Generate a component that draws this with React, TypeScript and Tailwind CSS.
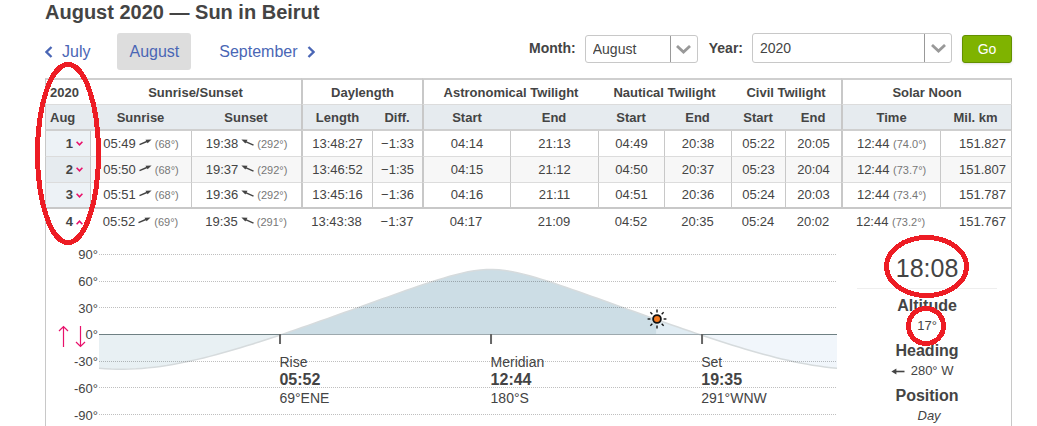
import { useState } from 'react';
import clsx from 'clsx';

interface SunDay {
  day: number;
  trend: 'down' | 'up';
  rise: string;
  riseAngle: string;
  set: string;
  setAngle: string;
  length: string;
  diff: string;
  twilight: string[];
  noon: string;
  noonAngle: string;
  distance: string;
}

const days: SunDay[] = [
  {
    day: 1, trend: 'down', rise: '05:49', riseAngle: '(68°)', set: '19:38', setAngle: '(292°)',
    length: '13:48:27', diff: '−1:33', twilight: ['04:14', '21:13', '04:49', '20:38', '05:22', '20:05'],
    noon: '12:44', noonAngle: '(74.0°)', distance: '151.827',
  },
  {
    day: 2, trend: 'down', rise: '05:50', riseAngle: '(68°)', set: '19:37', setAngle: '(292°)',
    length: '13:46:52', diff: '−1:35', twilight: ['04:15', '21:12', '04:50', '20:37', '05:23', '20:04'],
    noon: '12:44', noonAngle: '(73.7°)', distance: '151.807',
  },
  {
    day: 3, trend: 'down', rise: '05:51', riseAngle: '(68°)', set: '19:36', setAngle: '(292°)',
    length: '13:45:16', diff: '−1:36', twilight: ['04:16', '21:11', '04:51', '20:36', '05:24', '20:03'],
    noon: '12:44', noonAngle: '(73.4°)', distance: '151.787',
  },
  {
    day: 4, trend: 'up', rise: '05:52', riseAngle: '(69°)', set: '19:35', setAngle: '(291°)',
    length: '13:43:38', diff: '−1:37', twilight: ['04:17', '21:09', '04:52', '20:35', '05:24', '20:02'],
    noon: '12:44', noonAngle: '(73.2°)', distance: '151.767',
  },
];

const months = ['July', 'August', 'September'];
const years = ['2019', '2020', '2021'];

// Chart geometry
const CHART_W = 738;
const CHART_H = 181;
const HORIZON = 89.5;
const PX_PER_DEG = 160 / 180;
const gridLines = [9.5, 36.5, 62.5, 89.5, 116.5, 142.5, 169.5];
const axisLabels = ['90°', '60°', '30°', '0°', '-30°', '-60°', '-90°'];

const RISE = 5 + 52 / 60;
const NOON = 12 + 44 / 60;
const SET = 19 + 35 / 60;
const NOW = 18 + 8 / 60;

const rad = (deg: number) => (deg * Math.PI) / 180;
const hourToX = (hour: number) => (hour / 24) * CHART_W;

// Solar altitude for Beirut (33.9°N) in early August
const altitudeY = (hour: number) => {
  const lat = rad(33.9);
  const dec = rad(17.1);
  const angle = rad((hour - NOON) * 15);
  const alt = Math.asin(Math.sin(lat) * Math.sin(dec) + Math.cos(lat) * Math.cos(dec) * Math.cos(angle));
  return HORIZON - ((alt * 180) / Math.PI) * PX_PER_DEG;
};

const curve = (from: number, to: number) => {
  const steps = 60;
  return Array.from({ length: steps + 1 }, (_, i) => {
    const hour = from + ((to - from) * i) / steps;
    return `${hourToX(hour).toFixed(1)},${altitudeY(hour).toFixed(2)}`;
  }).join(' L');
};

const area = (from: number, to: number) =>
  `M${hourToX(from).toFixed(1)},${HORIZON} L${curve(from, to)} L${hourToX(to).toFixed(1)},${HORIZON} Z`;

const events = [
  { name: 'Rise', time: '05:52', heading: '69°ENE', hour: RISE },
  { name: 'Meridian', time: '12:44', heading: '180°S', hour: NOON },
  { name: 'Set', time: '19:35', heading: '291°WNW', hour: SET },
];

function Chevron({ d }: { d: string }) {
  return (
    <svg className="h-3 w-2" viewBox="0 0 8 12" fill="none" stroke="currentColor" strokeWidth="2.3" aria-hidden="true">
      <path d={d} />
    </svg>
  );
}

function RiseArrow() {
  return (
    <svg className="mx-[3px] mb-1 inline-block h-[7px] w-[13px]" viewBox="0 0 13 7" aria-hidden="true">
      <path d="M0.5 5.6 L9 2" stroke="#444" strokeWidth="1.4" />
      <path d="M12.6 0.6 L6.5 0.8 L8.6 4.2 Z" fill="#444" />
    </svg>
  );
}

function SetArrow() {
  return (
    <svg className="mx-[3px] mb-1 inline-block h-[7px] w-[13px]" viewBox="0 0 13 7" aria-hidden="true">
      <path d="M12.5 6.2 L4 2.4" stroke="#444" strokeWidth="1.4" />
      <path d="M0.4 0.6 L6.5 0.8 L4.4 4.4 Z" fill="#444" />
    </svg>
  );
}

function Ring({ className, width, height }: { className: string; width: number; height: number }) {
  return (
    <svg
      className={clsx('pointer-events-none absolute', className)}
      width={width}
      height={height}
      viewBox={`0 0 ${width} ${height}`}
      aria-hidden="true"
    >
      <ellipse
        cx={width / 2}
        cy={height / 2}
        rx={width / 2 - 2.5}
        ry={height / 2 - 2.5}
        fill="none"
        stroke="#ed1c24"
        strokeWidth="5"
        shapeRendering="crispEdges"
      />
    </svg>
  );
}

interface PickerProps {
  id: string;
  value: string;
  options: string[];
  onChange: (value: string) => void;
  className: string;
}

function Picker({ id, value, options, onChange, className }: PickerProps) {
  return (
    <div className={clsx('relative', className)}>
      <select
        id={id}
        value={value}
        onChange={(e) => onChange(e.target.value)}
        className="block h-full w-full appearance-none rounded-[3px] border border-[#c8c8c8] bg-white pr-7 pl-[7px] text-sm"
      >
        {options.map((option) => (
          <option key={option}>{option}</option>
        ))}
      </select>
      <span className="pointer-events-none absolute inset-y-px right-px flex w-[27px] items-center justify-center border-l border-[#999]">
        <svg className="h-[9px] w-[15px]" viewBox="0 0 15 9" fill="none" stroke="#999" strokeWidth="2.8" aria-hidden="true">
          <path d="M1 1 L7.5 7 L14 1" />
        </svg>
      </span>
    </div>
  );
}

function MonthNav() {
  return (
    <nav className="flex items-center text-base text-[#4a66b5]">
      <a href="#july" className="flex items-center gap-[9px]">
        <Chevron d="M6.5 1 L1.5 6 L6.5 11" />
        July
      </a>
      <a href="#august" className="mr-7 ml-[27px] flex h-[37px] items-center rounded-[3px] bg-[#ddd] px-3">
        August
      </a>
      <a href="#september" className="flex items-center gap-[9px]">
        September
        <Chevron d="M1.5 1 L6.5 6 L1.5 11" />
      </a>
    </nav>
  );
}

function DayRow({ data, last, striped }: { data: SunDay; last: boolean; striped: boolean }) {
  const open = data.trend === 'up';
  const line = open ? '' : last ? 'border-b-2 border-b-[#c8c8c8]' : 'border-b border-b-[#dcdcdc]';
  const cell = clsx('p-0', line, !open && 'border-l border-l-[#c8c8c8]');
  const group = clsx('p-0', line, !open && 'border-l-2 border-l-[#c8c8c8]');

  return (
    <tr className={clsx('h-[26px]', striped && 'bg-[#f7f7f7]')}>
      <th
        scope="row"
        className={clsx(
          'border-l border-l-[#c8c8c8] p-0 pr-[7px] text-right font-bold',
          line,
          !open && (striped ? 'bg-[#e6ebef]' : 'bg-[#edf2f6]'),
        )}
      >
        <button type="button" aria-label={`Day ${data.day}`} className="inline-flex items-center gap-[3px]">
          {data.day}
          <svg className="h-[5px] w-[7px]" viewBox="0 0 7 5" fill="none" stroke="#e8116b" strokeWidth="1.6" aria-hidden="true">
            <path d={open ? 'M0.6 4.2 L3.5 1.2 L6.4 4.2' : 'M0.6 0.8 L3.5 3.8 L6.4 0.8'} />
          </svg>
        </button>
      </th>
      <td className={cell}>
        {data.rise}
        <RiseArrow />
        <span className="text-[11px] text-[#777]">{data.riseAngle}</span>
      </td>
      <td className={cell}>
        {data.set}
        <SetArrow />
        <span className="text-[11px] text-[#777]">{data.setAngle}</span>
      </td>
      <td className={group}>{data.length}</td>
      <td className={cell}>{data.diff}</td>
      {data.twilight.map((time, i) => (
        <td key={i} className={i === 0 ? group : cell}>
          {time}
        </td>
      ))}
      <td className={group}>
        {data.noon} <span className="text-[11px] text-[#777]">{data.noonAngle}</span>
      </td>
      <td className={clsx(cell, 'border-r border-r-[#c8c8c8] pr-[5px] text-right')}>{data.distance}</td>
    </tr>
  );
}

function AltitudeChart() {
  return (
    <div className="relative flex flex-1">
      <div className="flex w-[53px] flex-col justify-between pr-px text-right text-[13px] leading-5">
        {axisLabels.map((label) => (
          <span key={label}>{label}</span>
        ))}
      </div>
      <svg
        className="absolute top-[80px] left-3 h-[23px] w-7"
        viewBox="0 0 28 23"
        fill="none"
        stroke="#e8116b"
        strokeWidth="1.2"
        aria-hidden="true"
      >
        <path d="M5.5 22 V1.5 M1 6 L5.5 1.5 L10 6" />
        <path d="M22.5 1 V21.5 M18 17 L22.5 21.5 L27 17" />
      </svg>
      <div className="relative flex-1">
        <svg
          className="block h-[181px] w-full"
          viewBox={`0 0 ${CHART_W} ${CHART_H}`}
          preserveAspectRatio="none"
          role="img"
          aria-label="Sun altitude"
        >
          <path d={area(0, RISE)} fill="#e8f0f3" />
          <path d={area(RISE, NOW)} fill="#ccdde5" />
          <path d={area(NOW, SET)} fill="#e0ecf3" />
          <path d={area(SET, 24)} fill="#f1f6fb" />
          <path d={`M${curve(0, 12)} L${curve(12, 24)}`} fill="none" stroke="#d6dbdd" strokeWidth="1.5" />
          {gridLines.map((y) => (
            <line
              key={y}
              x1="0"
              x2={CHART_W}
              y1={y}
              y2={y}
              stroke="#000"
              strokeOpacity="0.25"
              strokeDasharray="1 1"
              shapeRendering="crispEdges"
            />
          ))}
          <path
            d={`M0 ${HORIZON} H${hourToX(RISE)} M${hourToX(SET)} ${HORIZON} H${CHART_W}`}
            stroke="#6f8083"
            shapeRendering="crispEdges"
          />
          <path d={`M${hourToX(RISE)} ${HORIZON} H${hourToX(SET)}`} stroke="#9da9ae" shapeRendering="crispEdges" />
          {events.map((event) => (
            <rect key={event.name} x={Math.floor(hourToX(event.hour))} y="89" width="2" height="10" fill="#666" />
          ))}
        </svg>
        {events.map((event) => (
          <div
            key={event.name}
            className="absolute top-[108px] text-sm leading-[18px]"
            style={{ left: `${(event.hour / 24) * 100}%` }}
          >
            <div>{event.name}</div>
            <div className="text-base leading-[18px] font-bold">{event.time}</div>
            <div>{event.heading}</div>
          </div>
        ))}
        <svg
          className="absolute top-16 h-5 w-5 -translate-x-1/2"
          style={{ left: `${(NOW / 24) * 100}%` }}
          viewBox="-10 -10 20 20"
          aria-hidden="true"
        >
          <circle r="3.9" fill="#f47a20" stroke="#111" strokeWidth="1.8" />
          {[0, 45, 90, 135, 180, 225, 270, 315].map((deg) => (
            <path key={deg} d="M0 -6.6 V-9.4" stroke="#111" strokeWidth="1.4" transform={`rotate(${deg})`} />
          ))}
        </svg>
      </div>
    </div>
  );
}

function PositionPanel() {
  return (
    <div className="relative mr-[14px] ml-5 w-[140px] text-center text-[13px] leading-5">
      <div className="border-b border-[#eee] pt-[3px] text-[25px] leading-10">18:08</div>
      <dl className="flex flex-col gap-1 pt-[6px]">
        <div>
          <dt className="text-base leading-[21px] font-bold">Altitude</dt>
          <dd>17°</dd>
        </div>
        <div>
          <dt className="text-base leading-[21px] font-bold">Heading</dt>
          <dd className="flex items-center justify-center gap-[6px] pr-[10px]">
            <svg className="h-[7px] w-[14px]" viewBox="0 0 14 7" aria-hidden="true">
              <path d="M3 3.5 H13.5" stroke="#444" strokeWidth="1.6" />
              <path d="M0.4 3.5 L5.4 0.6 V6.4 Z" fill="#444" />
            </svg>
            280° W
          </dd>
        </div>
        <div>
          <dt className="text-base leading-[21px] font-bold">Position</dt>
          <dd className="pl-1 italic">Day</dd>
        </div>
      </dl>
      <Ring className="-top-[10px] left-[27px]" width={85} height={63} />
      <Ring className="top-[61px] left-[49px]" width={40} height={40} />
    </div>
  );
}

export default function App() {
  const [month, setMonth] = useState('August');
  const [year, setYear] = useState('2020');

  const topCell = 'border-t-2 border-b border-t-[#cfcfcf] border-b-[#dcdcdc] p-0 pt-px font-bold';
  const subCell = 'border-b-2 border-b-[#cfcfcf] p-0 pt-[2px] font-bold';
  const groupEdge = 'border-l-2 border-l-[#c8c8c8]';

  return (
    <main className="bg-white pr-[25px] pl-[45px] font-['Liberation_Sans',Arial,sans-serif] text-[#444]">
      <h1 className="mb-[9px] text-xl leading-6 font-bold">August 2020 — Sun in Beirut</h1>

      <div className="mb-2 flex items-start justify-between">
        <MonthNav />
        <form className="flex items-end text-sm" onSubmit={(e) => e.preventDefault()}>
          <label htmlFor="month" className="mr-[9px] leading-[30px] font-bold">
            Month:
          </label>
          <Picker id="month" value={month} options={months} onChange={setMonth} className="mr-[11px] h-7 w-[113px]" />
          <label htmlFor="year" className="mr-[9px] leading-[30px] font-bold">
            Year:
          </label>
          <Picker id="year" value={year} options={years} onChange={setYear} className="mr-[10px] h-[30px] w-[200px]" />
          <button
            type="submit"
            className="h-7 w-[50px] rounded-[3px] border border-[#639000] bg-[#7fb300] text-sm text-white shadow-sm"
          >
            Go
          </button>
        </form>
      </div>

      <div className="relative">
        <table className="w-full table-fixed border-separate border-spacing-0 text-center text-[13px] leading-5">
          <colgroup>
            <col className="w-[45px]" />
            <col className="w-[101px]" />
            <col className="w-[110px]" />
            <col className="w-[71px]" />
            <col className="w-[50px]" />
            <col className="w-[88px]" />
            <col className="w-[88px]" />
            <col className="w-[66px]" />
            <col className="w-[67px]" />
            <col className="w-[54px]" />
            <col className="w-[56px]" />
            <col className="w-[99px]" />
            <col className="w-[72px]" />
          </colgroup>
          <thead>
            <tr className="h-[27px]">
              <th className={clsx(topCell, 'border-l border-l-[#c8c8c8] pl-1 text-left')}>2020</th>
              <th colSpan={2} className={topCell}>Sunrise/Sunset</th>
              <th colSpan={2} className={clsx(topCell, groupEdge)}>Daylength</th>
              <th colSpan={2} className={clsx(topCell, groupEdge)}>Astronomical Twilight</th>
              <th colSpan={2} className={topCell}>Nautical Twilight</th>
              <th colSpan={2} className={topCell}>Civil Twilight</th>
              <th colSpan={2} className={clsx(topCell, groupEdge, 'border-r border-r-[#c8c8c8]')}>Solar Noon</th>
            </tr>
            <tr className="h-[26px] bg-[#e6ebef]">
              <th className={clsx(subCell, 'border-l border-l-[#c8c8c8] pl-1 text-left')}>Aug</th>
              <th className={subCell}>Sunrise</th>
              <th className={subCell}>Sunset</th>
              <th className={clsx(subCell, groupEdge)}>Length</th>
              <th className={subCell}>Diff.</th>
              <th className={clsx(subCell, groupEdge)}>Start</th>
              <th className={subCell}>End</th>
              <th className={subCell}>Start</th>
              <th className={subCell}>End</th>
              <th className={subCell}>Start</th>
              <th className={subCell}>End</th>
              <th className={clsx(subCell, groupEdge)}>Time</th>
              <th className={clsx(subCell, 'border-r border-r-[#c8c8c8]')}>Mil. km</th>
            </tr>
          </thead>
          <tbody>
            {days.map((data, i) => (
              <DayRow key={data.day} data={data} last={i === 2} striped={i === 1} />
            ))}
            <tr>
              <td colSpan={13} className="border-x border-[#c8c8c8] p-0 pt-[10px] text-left">
                <div className="flex">
                  <AltitudeChart />
                  <PositionPanel />
                </div>
              </td>
            </tr>
          </tbody>
        </table>
        <Ring className="-top-4 -left-[10px]" width={66} height={183} />
      </div>
    </main>
  );
}
